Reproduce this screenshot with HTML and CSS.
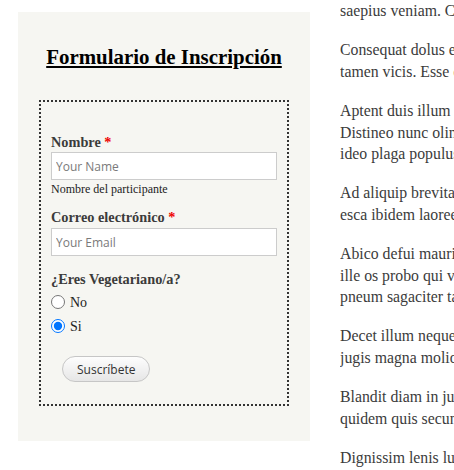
FILE: index.html
```html
<!DOCTYPE html>
<html lang="es">
<head>
<meta charset="utf-8">
<title>Formulario de Inscripción</title>
<link rel="stylesheet" href="styles.css">
</head>
<body>
<div class="page">
  <aside class="sidebar">
    <h2 class="block-title">Formulario de Inscripción</h2>
    <form class="signup">
      <div class="field">
        <label class="field-label" for="name">Nombre <span class="req">*</span></label>
        <input class="text-input" id="name" type="text" placeholder="Your Name">
        <div class="description">Nombre del participante</div>
      </div>
      <div class="field field-email">
        <label class="field-label" for="email">Correo electrónico <span class="req">*</span></label>
        <input class="text-input" id="email" type="text" placeholder="Your Email">
      </div>
      <div class="field field-radios">
        <div class="field-label">¿Eres Vegetariano/a?</div>
        <label class="radio-row"><input class="radio" type="radio" name="veg" value="no"><span>No</span></label>
        <label class="radio-row"><input class="radio" type="radio" name="veg" value="si" checked><span>Si</span></label>
      </div>
      <div class="actions">
        <button class="button" type="button">Suscríbete</button>
      </div>
    </form>
  </aside>
  <main class="content">
    <p>saepius veniam. Commoveo eros natu</p>
    <p>Consequat dolus exerci iusto ludus<br>tamen vicis. Esse eu gilvus</p>
    <p>Aptent duis illum causa capto<br>Distineo nunc olim pagus<br>ideo plaga populus ratis</p>
    <p>Ad aliquip brevitas facilisi<br>esca ibidem laoreet nimis</p>
    <p>Abico defui mauris modo<br>ille os probo qui vindico<br>pneum sagaciter tamen</p>
    <p>Decet illum neque praemitto<br>jugis magna molior nisl</p>
    <p>Blandit diam in jugis vero<br>quidem quis secundum</p>
    <p>Dignissim lenis luctus saluto</p>
  </main>
</div>
</body>
</html>
```

FILE: styles.css
```css
html, body {
  margin: 0;
  padding: 0;
  background: #ffffff;
}

.page {
  display: flex;
  align-items: flex-start;
  height: 470px;
  overflow: hidden;
  font-family: "Liberation Serif", "Times New Roman", serif;
  color: #3b3b3b;
}

.sidebar {
  flex: 0 0 292px;
  width: 292px;
  margin: 12px 0 0 18px;
  padding: 32px 21px 35px;
  box-sizing: border-box;
  background: #f6f6f2;
}

.block-title {
  margin: 0;
  font-size: 20.9px;
  line-height: 26px;
  font-weight: bold;
  color: #000000;
  text-align: center;
  text-decoration: underline;
}

.signup {
  margin: 30px 0 0;
  border: 2px dotted #333333;
  padding: 30px 10px 22px;
}

.field-label {
  display: block;
  font-size: 14.3px;
  line-height: 20px;
  font-weight: bold;
  color: #3b3b3b;
}

.req {
  color: #ee0000;
}

.text-input {
  display: block;
  width: 100%;
  height: 28px;
  box-sizing: border-box;
  margin: 0;
  padding: 0 4px;
  border: 1px solid #cccccc;
  border-radius: 0;
  background: #ffffff;
  font-family: "Open Sans", "DejaVu Sans", sans-serif;
  font-size: 12px;
  color: #333333;
  outline: none;
}

.text-input::placeholder {
  color: #7a7a7a;
}

.description {
  margin-top: 1px;
  font-size: 12px;
  line-height: 16px;
  color: #222222;
}

.field-email {
  margin-top: 10px;
}

.field-email .field-label {
  margin-bottom: 1px;
}

.field-radios {
  margin-top: 13px;
}

.radio-row {
  display: flex;
  align-items: center;
  height: 22px;
  margin-top: 2px;
  font-size: 14px;
  color: #222222;
}

.field-radios .field-label + .radio-row {
  margin-top: 3px;
}

.radio {
  width: 14px;
  height: 14px;
  margin: -2px 5px 0 0;
}

.actions {
  margin-top: 18px;
  padding-left: 11px;
}

.button {
  height: 26px;
  padding: 0 14px;
  border: 1px solid #c6c6c6;
  border-radius: 13px;
  background: linear-gradient(#fdfdfd, #e6e6e6);
  font-family: "Open Sans", "DejaVu Sans", sans-serif;
  font-size: 12px;
  color: #333333;
  cursor: pointer;
}

.content {
  flex: 1 1 auto;
  min-width: 0;
  margin-left: 30px;
  overflow: hidden;
  white-space: nowrap;
  font-size: 15.8px;
}

.content p {
  margin: 0 0 17.8px;
  line-height: 21.5px;
}
```
